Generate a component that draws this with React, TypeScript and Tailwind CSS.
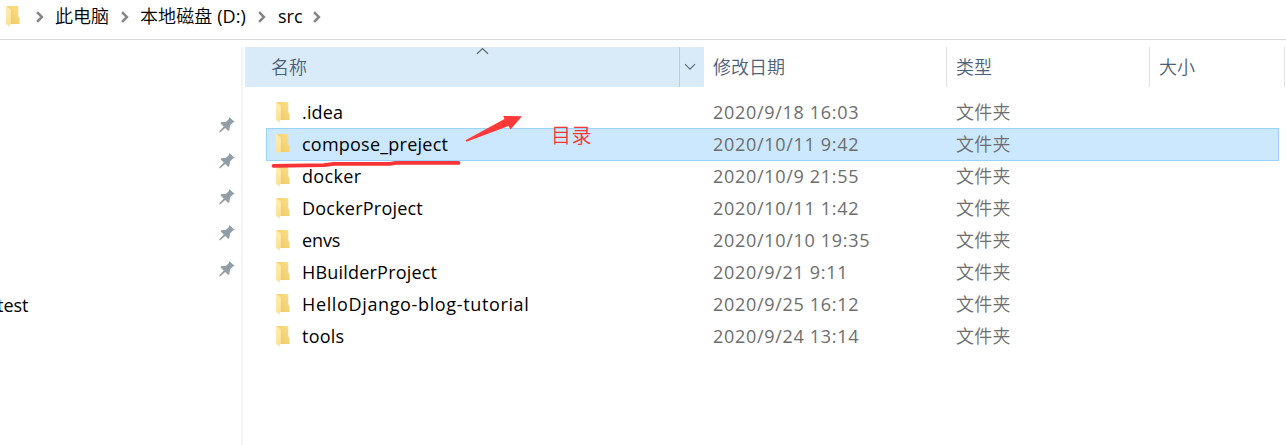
const folders = [
  { name: '.idea', date: '2020/9/18 16:03', tracking: 'tracking-[0.15px]' },
  { name: 'compose_preject', date: '2020/10/11 9:42', tracking: 'tracking-[0.23px]', selected: true },
  { name: 'docker', date: '2020/10/9 21:55', tracking: 'tracking-[0.35px]' },
  { name: 'DockerProject', date: '2020/10/11 1:42', tracking: 'tracking-[0.22px]' },
  { name: 'envs', date: '2020/10/10 19:35', tracking: 'tracking-[-0.1px]' },
  { name: 'HBuilderProject', date: '2020/9/21 9:11', tracking: 'tracking-[0.2px]' },
  { name: 'HelloDjango-blog-tutorial', date: '2020/9/25 16:12', tracking: 'tracking-[0.64px]' },
  { name: 'tools', date: '2020/9/24 13:14', tracking: 'tracking-[0.25px]' },
];

function FolderIcon() {
  return (
    <svg width="14" height="21" viewBox="0 0 14 21" className="block shrink-0">
      <defs>
        <linearGradient id="folderBack" x1="0" y1="1" x2="1" y2="0">
          <stop offset="0" stopColor="#ebc865" />
          <stop offset="1" stopColor="#fddf86" />
        </linearGradient>
        <linearGradient id="folderFront" x1="0" y1="0" x2="0" y2="1">
          <stop offset="0" stopColor="#ffedb2" />
          <stop offset="1" stopColor="#fde193" />
        </linearGradient>
      </defs>
      <path d="M0.5 0H12.3V10.5L13.6 12V18H3.5L0.5 15Z" fill="url(#folderBack)" />
      <path d="M0 0L4.8 3.4V17.5L3.8 18.2V21L0 17.7Z" fill="url(#folderFront)" />
    </svg>
  );
}

function Pin() {
  return (
    <svg width="16" height="16" viewBox="0 0 16 16" className="block">
      <path d="M10.4 0L15.6 5L13.9 5.6L11 8.6L10.3 13.5L9.1 13.7L6.2 10.9L1.2 15.2L0.2 15.4L0.4 14.3L4.8 9.6L1.6 6.5L2.2 5.3L7.1 4.8L9.9 2Z" fill="#929da7" />
    </svg>
  );
}

function Separator() {
  return (
    <svg width="8" height="12" viewBox="0 0 8 12" className="block shrink-0">
      <path d="M1.1 1.2L5.9 6L1.1 10.8" fill="none" stroke="#858585" strokeWidth="2.5" />
    </svg>
  );
}

export default function App() {
  return (
    <div className="relative flex h-[445px] w-[1286px] flex-col overflow-hidden bg-white font-['Open_Sans','Noto_Sans_CJK_SC',sans-serif] text-[18px] leading-[32px] whitespace-nowrap text-black">
      <nav className="flex h-10 shrink-0 items-center border-b border-[#d9d9d9] pb-[6px] pl-1.5">
        <div className="w-[30px]"><FolderIcon /></div>
        <div className="w-[19px]"><Separator /></div>
        <span className="-mt-0.5 w-[66px] font-[350]">此电脑</span>
        <div className="w-[19px]"><Separator /></div>
        <span className="-mt-0.5 w-[118px] font-[350] tracking-[0.1px]">
          本地磁盘 <span className="font-normal">(D:)</span>
        </span>
        <div className="w-5"><Separator /></div>
        <span className="-mt-0.5 w-[35px]">src</span>
        <Separator />
      </nav>

      <div className="flex min-h-0 flex-1 pt-[7px]">
        <aside className="flex w-[241px] shrink-0 flex-col overflow-hidden pt-[60px]">
          {[0, 1, 2, 3, 4].map((i) => (
            <div key={i} className="flex h-9 shrink-0 items-center justify-end pr-1.5"><Pin /></div>
          ))}
          <div className="-ml-[3px] flex h-9 items-center">test</div>
        </aside>
        <div className="mr-0.5 w-0.5 shrink-0 bg-[#f5f5f5]" />

        <main className="flex min-w-0 flex-1 flex-col font-[350]">
          <header className="flex h-10 shrink-0 items-center text-[#4c607a]">
            <div className="relative flex h-full w-[459px] items-center bg-[#d9ebf9]">
              <span className="flex-1 pl-[26px]">名称</span>
              <svg className="absolute top-0 left-[231px]" width="13" height="8" viewBox="0 0 13 8">
                <path d="M1 6.7L6.5 1.5L12 6.7" fill="none" stroke="#60686f" strokeWidth="1.2" />
              </svg>
              <div className="flex h-full w-[25px] items-center justify-center border-l border-[#b9cfe0] pr-[5px]">
                <svg width="12" height="8" viewBox="0 0 12 8">
                  <path d="M1 1.2L6 6.2L11 1.2" fill="none" stroke="#5c6c7a" strokeWidth="1.2" />
                </svg>
              </div>
            </div>
            <div className="flex h-full w-[243px] items-center border-r border-[#e2e2e2] pl-[9px]">修改日期</div>
            <div className="flex h-full w-[203px] items-center border-r border-[#e2e2e2] pl-[9px]">类型</div>
            <div className="flex h-full w-[135px] items-center border-r border-[#e2e2e2] pl-[9px]">大小</div>
          </header>

          <div className="flex flex-col pt-[9px] pl-[21px]">
            {folders.map((f) => (
              <div
                key={f.name}
                className={
                  f.selected
                    ? '-mb-px flex h-[33px] w-[1013px] items-center border border-[#99d1ff] bg-[#cce8ff] pb-px pl-[9px]'
                    : 'flex h-8 w-[1013px] items-center pl-[10px]'
                }
              >
                <div className="w-[26px]"><FolderIcon /></div>
                <span className={`w-[411px] font-normal ${f.tracking}`}>{f.name}</span>
                <span className="w-[243px] font-normal tracking-[0.69px] text-[#6d6d6d]">{f.date}</span>
                <span className="tracking-[0.3px] text-[#6d6d6d]">文件夹</span>
              </div>
            ))}
          </div>
        </main>
      </div>

      <svg className="absolute top-[110px] left-[265px]" width="265" height="62" viewBox="265 110 265 62">
        <path d="M273.5 165.8L324 165.2L334 163.9L390 163.8L396 162.9L458.5 162.9" fill="none" stroke="#f93437" strokeWidth="3.8" strokeLinecap="round" strokeLinejoin="round" />
        <path d="M465.5 140.2L504.5 119L503.3 116L522 116.3L510.5 129.5L508.5 126L466.5 141.8Z" fill="#ff3a38" />
      </svg>
      <span className="absolute top-[120px] left-[551px] text-[20px] font-[350] tracking-[0.4px] text-[#fa3434]">目录</span>
    </div>
  );
}
